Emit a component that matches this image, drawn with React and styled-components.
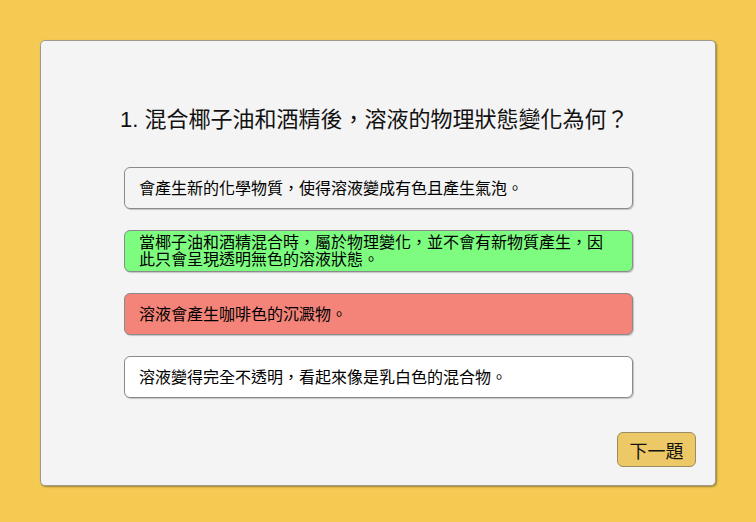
import React from "react";
import styled, { createGlobalStyle } from "styled-components";

const GlobalStyle = createGlobalStyle`
  html, body {
    margin: 0;
    padding: 0;
    background: #f4ca52;
  }
  body {
    font-family: "Liberation Sans", "Noto Sans CJK TC", sans-serif;
  }
`;

const options = [
  { text: "會產生新的化學物質，使得溶液變成有色且產生氣泡。", state: "none" },
  { text: "當椰子油和酒精混合時，屬於物理變化，並不會有新物質產生，因此只會呈現透明無色的溶液狀態。", state: "correct" },
  { text: "溶液會產生咖啡色的沉澱物。", state: "wrong" },
  { text: "溶液變得完全不透明，看起來像是乳白色的混合物。", state: "plain" },
];

const App = () => {
  return (
    <Page>
      <GlobalStyle />
      <Card>
        <Question>1. 混合椰子油和酒精後，溶液的物理狀態變化為何？</Question>
        <OptionList>
          {options.map((o, i) => (
            <Option key={i} $state={o.state}>
              {o.text}
            </Option>
          ))}
        </OptionList>
        <Footer>
          <NextButton>下一題</NextButton>
        </Footer>
      </Card>
    </Page>
  );
};

const bg = {
  none: "#f4f4f4",
  correct: "#7efc80",
  wrong: "#f48479",
  plain: "#ffffff",
};

const Page = styled.div`
  box-sizing: border-box;
  width: 756px;
  height: 522px;
  padding: 40px 40px 36px 40px;
`;

const Card = styled.div`
  box-sizing: border-box;
  height: 446px;
  display: flex;
  flex-direction: column;
  padding: 66px 19px 18px 79px;
  background: #f4f4f4;
  border: 1px solid #a09a8a;
  border-radius: 5px;
  box-shadow: 1px 1px 2px rgba(0, 0, 0, 0.35);
`;

const Question = styled.h1`
  margin: 0 0 34px 0;
  font-size: 22px;
  line-height: 26px;
  font-weight: normal;
  color: #111;
`;

const OptionList = styled.div`
  display: flex;
  flex-direction: column;
  gap: 21px;
  margin-left: 4px;
  width: 509px;
`;

const Option = styled.div`
  box-sizing: border-box;
  min-height: 42px;
  display: flex;
  align-items: center;
  padding: 3px 22px 3px 14px;
  background: ${(p) => bg[p.$state]};
  border: 1px solid #8a8a8a;
  border-radius: 6px;
  box-shadow: 1px 1px 1px rgba(0, 0, 0, 0.2);
  font-size: 16px;
  line-height: 17px;
  color: #000;
`;

const Footer = styled.div`
  margin-top: auto;
  display: flex;
  justify-content: flex-end;
`;

const NextButton = styled.button`
  box-sizing: border-box;
  width: 79px;
  height: 35px;
  padding: 0;
  background: #edc866;
  border: 1px solid #9c8c62;
  border-radius: 6px;
  font-family: "Liberation Sans", "Noto Sans CJK TC", sans-serif;
  font-size: 18px;
  color: #111;
  cursor: pointer;
`;

export default App;
